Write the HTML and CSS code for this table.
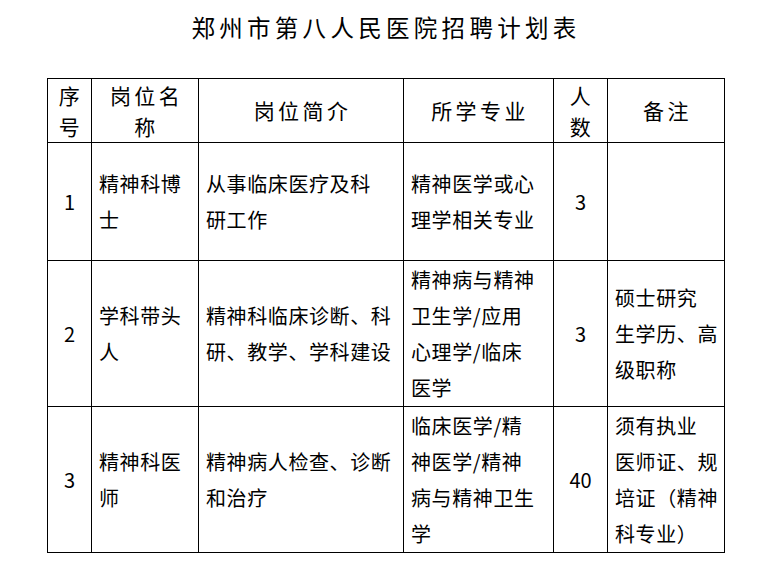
FILE: index.html
```html
<!DOCTYPE html>
<html lang="zh-CN">
<head>
<meta charset="utf-8">
<title>郑州市第八人民医院招聘计划表</title>
<link rel="stylesheet" href="styles.css">
</head>
<body>
<div class="title">郑州市第八人民医院招聘计划表</div>
<table class="plan">
  <colgroup>
    <col class="c1"><col class="c2"><col class="c3"><col class="c4"><col class="c5"><col class="c6">
  </colgroup>
  <tr class="head">
    <th>序<br>号</th>
    <th>岗位名<br>称</th>
    <th>岗位简介</th>
    <th>所学专业</th>
    <th>人<br>数</th>
    <th>备注</th>
  </tr>
  <tr class="r1">
    <td class="num">1</td>
    <td>精神科博<br>士</td>
    <td>从事临床医疗及科<br>研工作</td>
    <td>精神医学或心<br>理学相关专业</td>
    <td class="num">3</td>
    <td></td>
  </tr>
  <tr class="r2">
    <td class="num">2</td>
    <td>学科带头<br>人</td>
    <td>精神科临床诊断、科<br>研、教学、学科建设</td>
    <td>精神病与精神<br>卫生学/应用<br>心理学/临床<br>医学</td>
    <td class="num">3</td>
    <td>硕士研究<br>生学历、高<br>级职称</td>
  </tr>
  <tr class="r3">
    <td class="num">3</td>
    <td>精神科医<br>师</td>
    <td>精神病人检查、诊断<br>和治疗</td>
    <td>临床医学/精<br>神医学/精神<br>病与精神卫生<br>学</td>
    <td class="num">40</td>
    <td>须有执业<br>医师证、规<br>培证（精神<br>科专业）</td>
  </tr>
</table>
</body>
</html>
```
FILE: styles.css
```css
html, body {
  margin: 0;
  padding: 0;
  background: #fff;
  color: #000;
  font-family: "Noto Sans CJK SC", "Noto Sans", sans-serif;
}
.title {
  padding-top: 12px;
  height: 30px;
  line-height: 30px;
  text-align: center;
  font-size: 23.5px;
  letter-spacing: 4.3px;
  margin-bottom: 36px;
  padding-left: 4px;
}
.plan {
  margin-left: 47px;
  border-collapse: collapse;
  table-layout: fixed;
  width: 678px;
}
.c1 { width: 44px; }
.c2 { width: 107px; }
.c3 { width: 205px; }
.c4 { width: 150px; }
.c5 { width: 54px; }
.c6 { width: 117px; }
.plan th, .plan td {
  border: 1px solid #000;
  padding: 0 0 0 7px;
  vertical-align: middle;
  white-space: nowrap;
  overflow: hidden;
}
.plan th {
  font-weight: normal;
  font-size: 21px;
  line-height: 31px;
  letter-spacing: 3.4px;
  text-align: center;
  padding: 0 0 0 3px;
}
.plan td {
  font-size: 20px;
  line-height: 36px;
  letter-spacing: 0.6px;
  text-align: left;
}
.plan td.num {
  text-align: center;
  padding: 0;
  letter-spacing: 0;
}
.head { height: 64px; }
.r1 { height: 118px; }
.r2 { height: 146px; }
.r3 { height: 146px; }
```
